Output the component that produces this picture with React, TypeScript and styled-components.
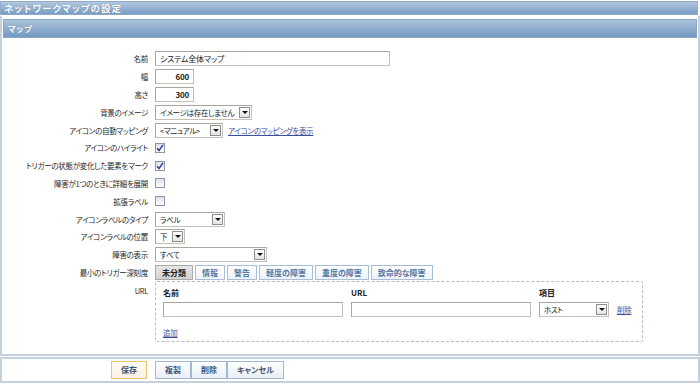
import React from "react";
import styled, { createGlobalStyle } from "styled-components";

const GlobalStyle = createGlobalStyle`
  html, body { margin: 0; padding: 0; background: #ffffff; }
  body {
    font-family: "Noto Sans CJK JP", "Noto Sans", sans-serif;
    font-size: 8px;
    color: #333333;
    font-feature-settings: "palt";
  }
  #root { width: 700px; height: 386px; overflow: hidden; }
  * { box-sizing: border-box; }
`;

const Page = styled.div`
  width: 700px;
  height: 386px;
  padding-top: 1px;
  display: flex;
  flex-direction: column;
`;

const TitleBar = styled.div`
  width: 698px;
  height: 14px;
  border: 1px solid #8fa9c7;
  background: linear-gradient(#b2c7dd, #789dc5);
  color: #ffffff;
  font-weight: bold;
  font-size: 9.5px;
  letter-spacing: 1px;
  line-height: 12px;
  padding-left: 3px;
  text-shadow: 0 0 1px #56779e;
  white-space: nowrap;
`;

const Panel = styled.div`
  width: 700px;
  margin-top: 1px;
  border: 2px solid #c3d1df;
  border-top: 0;
  padding: 3px 1px 12px 1px;
`;

const SubHeader = styled.div`
  height: 19px;
  border: 1px solid #8aa6c6;
  background: linear-gradient(#acc3db, #7399c2);
  color: #ffffff;
  font-weight: bold;
  font-size: 8.5px;
  letter-spacing: 0.5px;
  line-height: 17px;
  padding-left: 4px;
  text-shadow: 0 0 1px #56779e;
`;

const FormBody = styled.div`
  padding-top: 12px;
  display: grid;
  grid-template-columns: 145px 1fr;
  column-gap: 7px;
  grid-template-rows: repeat(13, 17.8px) auto;
`;

const Label = styled.div<{ $top?: boolean }>`
  text-align: right;
  color: #262626;
  font-size: 7.5px;
  letter-spacing: -0.3px;
  white-space: nowrap;
  display: flex;
  align-items: ${(p) => (p.$top ? "flex-start" : "center")};
  justify-content: flex-end;
  padding-top: ${(p) => (p.$top ? "4px" : "0")};
`;

const Value = styled.div`
  display: flex;
  align-items: center;
  gap: 5px;
  min-width: 0;
`;

const UrlCell = styled.div`
  display: flex;
  align-items: flex-start;
`;

const TextInput = styled.div<{ $w: number; $right?: boolean }>`
  width: ${(p) => p.$w}px;
  height: 15px;
  border: 1px solid #c6c1b8;
  border-top-color: #aaa59c;
  border-left-color: #aaa59c;
  background: #ffffff;
  font-size: 8px;
  letter-spacing: -0.2px;
  line-height: 13px;
  padding: 0 4px;
  color: #222222;
  text-align: ${(p) => (p.$right ? "right" : "left")};
  font-weight: ${(p) => (p.$right ? "bold" : "normal")};
  white-space: nowrap;
  overflow: hidden;
`;

const SelectBox = styled.div<{ $w: number }>`
  width: ${(p) => p.$w}px;
  height: 15px;
  border: 1px solid #c6c1b8;
  border-top-color: #aaa59c;
  border-left-color: #aaa59c;
  background: #ffffff;
  display: flex;
  align-items: center;
  padding-left: 4px;
  padding-right: 1px;
  font-size: 7.5px;
  letter-spacing: -0.3px;
  color: #222222;
  white-space: nowrap;
`;

const SelectText = styled.span`
  flex: 1;
  overflow: hidden;
`;

const SelectArrow = styled.span`
  flex: none;
  width: 11px;
  height: 11px;
  border: 1px solid #8e8e8e;
  background: linear-gradient(#ffffff, #e4e4e4);
  display: flex;
  align-items: center;
  justify-content: center;
  &::after {
    content: "";
    border-left: 3px solid transparent;
    border-right: 3px solid transparent;
    border-top: 3px solid #111111;
  }
`;

const Link = styled.span`
  color: #3a4da0;
  text-decoration: underline;
  font-size: 7.5px;
  letter-spacing: -0.3px;
  white-space: nowrap;
`;

const CheckBox = styled.span`
  width: 10px;
  height: 10px;
  border: 1px solid #8d96aa;
  background: linear-gradient(#dcdfe6, #ffffff);
  display: flex;
  align-items: center;
  justify-content: center;
`;

const Segments = styled.div`
  display: flex;
  gap: 2px;
`;

const Segment = styled.span<{ $active?: boolean }>`
  height: 15px;
  padding: 0 6px;
  border: 1px solid ${(p) => (p.$active ? "#a9a9a9" : "#a8bed6")};
  background: ${(p) =>
    p.$active ? "linear-gradient(#e6e6e6, #d3d3d3)" : "linear-gradient(#ffffff, #eef3f9)"};
  color: ${(p) => (p.$active ? "#222222" : "#55769f")};
  font-weight: bold;
  font-size: 8px;
  line-height: 13px;
  white-space: nowrap;
`;

const UrlBox = styled.div`
  width: 488px;
  height: 61px;
  border: 1px dashed #b5bad2;
  border-radius: 2px;
  padding: 3px 8px 0 7px;
  display: grid;
  grid-template-columns: 180px 180px 70px auto;
  column-gap: 8px;
  grid-template-rows: 14px 15px 14px;
  row-gap: 3px;
  align-items: center;
`;

const ColHead = styled.span`
  font-weight: bold;
  font-size: 8px;
  color: #222222;
`;

const AddLink = styled(Link)`
  grid-column: 1;
  margin-top: 10px;
`;

const Footer = styled.div`
  width: 700px;
  margin-top: 1px;
  height: 26px;
  border: 2px solid #c3d1df;
  display: flex;
  align-items: center;
  padding-left: 109px;
  gap: 8px;
`;

const Button = styled.span<{ $primary?: boolean }>`
  height: 18px;
  padding: 0 9px;
  border: 1px solid ${(p) => (p.$primary ? "#f2bf73" : "#a3b8d1")};
  background: ${(p) =>
    p.$primary ? "linear-gradient(#fffdf8, #fbf1e2)" : "linear-gradient(#ffffff, #e9eff6)"};
  color: #3f5574;
  font-weight: bold;
  font-size: 8px;
  line-height: 16px;
  white-space: nowrap;
  display: flex;
  align-items: center;
`;

const ButtonGroup = styled.div`
  display: flex;
`;

const Check = () => (
  <svg width="8" height="8" viewBox="0 0 8 8">
    <path d="M1 4.2 L3 6.5 L7 0.8" fill="none" stroke="#2d3f98" strokeWidth="1.4" />
  </svg>
);

const Select = ({ w, children }: { w: number; children: React.ReactNode }) => (
  <SelectBox $w={w}>
    <SelectText>{children}</SelectText>
    <SelectArrow />
  </SelectBox>
);

export default function App() {
  return (
    <>
      <GlobalStyle />
      <Page>
        <TitleBar>ネットワークマップの設定</TitleBar>
        <Panel>
          <SubHeader>マップ</SubHeader>
          <FormBody>
            <Label>名前</Label>
            <Value>
              <TextInput $w={235}>システム全体マップ</TextInput>
            </Value>

            <Label>幅</Label>
            <Value>
              <TextInput $w={39} $right>600</TextInput>
            </Value>

            <Label>高さ</Label>
            <Value>
              <TextInput $w={39} $right>300</TextInput>
            </Value>

            <Label>背景のイメージ</Label>
            <Value>
              <Select w={97}>イメージは存在しません</Select>
            </Value>

            <Label>アイコンの自動マッピング</Label>
            <Value>
              <Select w={68}>&lt;マニュアル&gt;</Select>
              <Link>アイコンのマッピングを表示</Link>
            </Value>

            <Label>アイコンのハイライト</Label>
            <Value>
              <CheckBox>
                <Check />
              </CheckBox>
            </Value>

            <Label>トリガーの状態が変化した要素をマーク</Label>
            <Value>
              <CheckBox>
                <Check />
              </CheckBox>
            </Value>

            <Label>障害が1つのときに詳細を展開</Label>
            <Value>
              <CheckBox />
            </Value>

            <Label>拡張ラベル</Label>
            <Value>
              <CheckBox />
            </Value>

            <Label>アイコンラベルのタイプ</Label>
            <Value>
              <Select w={70}>ラベル</Select>
            </Value>

            <Label>アイコンラベルの位置</Label>
            <Value>
              <Select w={30}>下</Select>
            </Value>

            <Label>障害の表示</Label>
            <Value>
              <Select w={112}>すべて</Select>
            </Value>

            <Label>最小のトリガー深刻度</Label>
            <Value>
              <Segments>
                <Segment $active>未分類</Segment>
                <Segment>情報</Segment>
                <Segment>警告</Segment>
                <Segment>軽度の障害</Segment>
                <Segment>重度の障害</Segment>
                <Segment>致命的な障害</Segment>
              </Segments>
            </Value>

            <Label $top>URL</Label>
            <UrlCell>
              <UrlBox>
                <ColHead>名前</ColHead>
                <ColHead>URL</ColHead>
                <ColHead>項目</ColHead>
                <span />
                <TextInput $w={180} />
                <TextInput $w={180} />
                <Select w={70}>ホスト</Select>
                <Link>削除</Link>
                <AddLink>追加</AddLink>
              </UrlBox>
            </UrlCell>
          </FormBody>
        </Panel>
        <Footer>
          <Button $primary>保存</Button>
          <ButtonGroup>
            <Button>複製</Button>
            <Button>削除</Button>
            <Button>キャンセル</Button>
          </ButtonGroup>
        </Footer>
      </Page>
    </>
  );
}
